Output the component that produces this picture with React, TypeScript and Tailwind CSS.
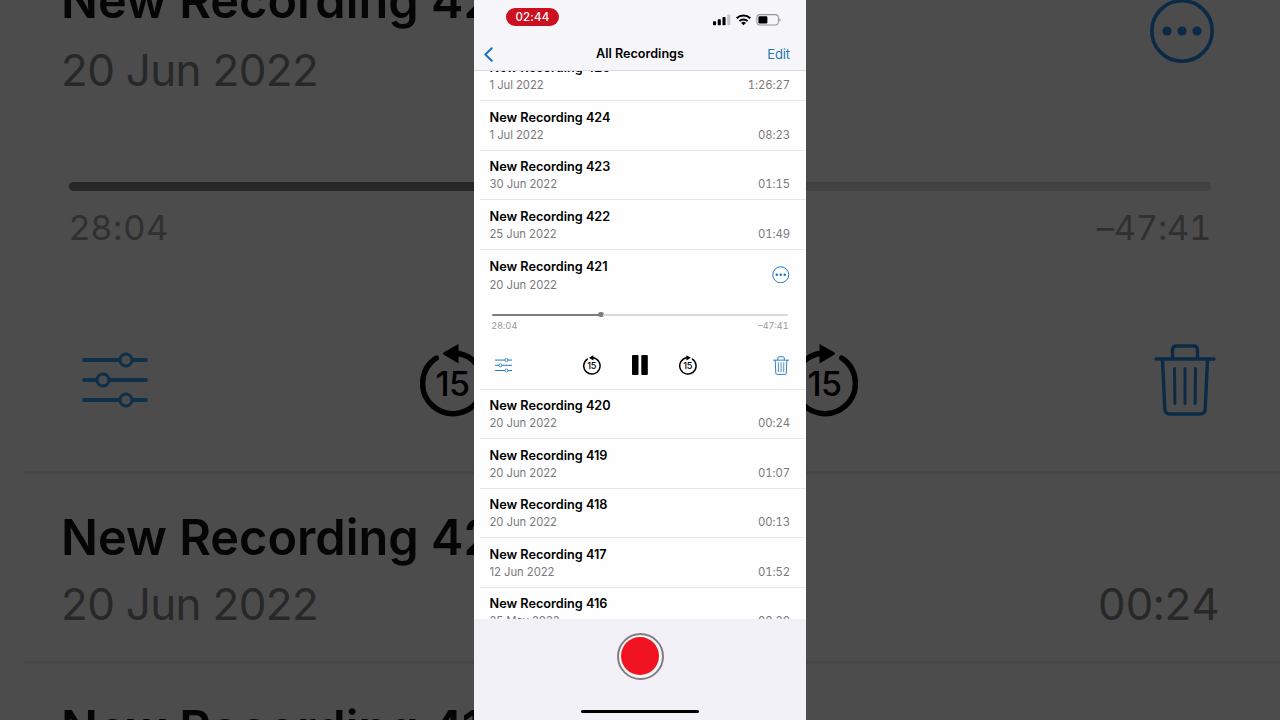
import React from "react";

type Recording = { title: string; date: string; length: string };

const newer: Recording[] = [
  { title: "New Recording 425", date: "1 Jul 2022", length: "1:26:27" },
  { title: "New Recording 424", date: "1 Jul 2022", length: "08:23" },
  { title: "New Recording 423", date: "30 Jun 2022", length: "01:15" },
  { title: "New Recording 422", date: "25 Jun 2022", length: "01:49" },
];

const older: Recording[] = [
  { title: "New Recording 420", date: "20 Jun 2022", length: "00:24" },
  { title: "New Recording 419", date: "20 Jun 2022", length: "01:07" },
  { title: "New Recording 418", date: "20 Jun 2022", length: "00:13" },
  { title: "New Recording 417", date: "12 Jun 2022", length: "01:52" },
  { title: "New Recording 416", date: "25 May 2022", length: "00:20" },
];

type IconProps = { className: string };

function SlidersIcon({ className }: IconProps) {
  return (
    <svg viewBox="0 0 66 56" fill="none" stroke="currentColor" strokeWidth="3.8" className={className}>
      <path d="M2 8h35.500M50.500 8H64M2 28h12.500M27.500 28H64M2 48h35.500M50.500 48H64" strokeLinecap="round" />
      <circle cx="44" cy="8" r="6" strokeWidth="3" />
      <circle cx="21" cy="28" r="6" strokeWidth="3" />
      <circle cx="44" cy="48" r="6" strokeWidth="3" />
    </svg>
  );
}

function SkipIcon({ className, forward = false }: IconProps & { forward?: boolean }) {
  return (
    <svg viewBox="0 0 66 74" className={className}>
      <g transform={forward ? "translate(66 0) scale(-1 1)" : undefined}>
        <path d="M37 10.300A30.300 30.300 0 1 1 16.300 15" fill="none" stroke="currentColor" strokeWidth="5.400" strokeLinecap="round" />
        <path d="M38.500 1v19.500L23.500 11.500Q22.500 10.500 23.500 9.500z" fill="currentColor" />
      </g>
      <text
        x="32.500"
        y="53"
        textAnchor="middle"
        fill="currentColor"
        className="font-['Inter'] text-[34px] font-medium tracking-[-0.5px]"
      >
        15
      </text>
    </svg>
  );
}

function MoreIcon({ className }: IconProps) {
  return (
    <svg viewBox="0 0 66 66" className={className}>
      <circle cx="33" cy="33" r="30.200" fill="none" stroke="currentColor" strokeWidth="3.600" />
      <circle cx="18" cy="33" r="4.600" fill="currentColor" />
      <circle cx="33" cy="33" r="4.600" fill="currentColor" />
      <circle cx="48" cy="33" r="4.600" fill="currentColor" />
    </svg>
  );
}

function TrashIcon({ className }: IconProps) {
  return (
    <svg viewBox="0 0 62 74" fill="none" stroke="currentColor" strokeWidth="3.400" strokeLinecap="round" className={className}>
      <path d="M2 16h58M18.500 15V7q0-4 4-4h17q4 0 4 4v8" />
      <path d="M8.500 17l2.300 49q.3 5 5.200 5h30q4.900 0 5.200-5l2.300-49" />
      <path d="M20.500 25.500l.4 35M31 25.500v35M41.500 25.500l-.4 35" strokeWidth="3" />
    </svg>
  );
}

function Separator() {
  return <div className="ml-1.5 h-px shrink-0 bg-[#e8e8ea]" />;
}

function Row({ title, date, length }: Recording) {
  return (
    <div className="h-[49.5px] shrink-0">
      <Separator />
      <div className="flex flex-col pt-[7.400px] pr-4 pl-[15.5px]">
        <div className="h-[18px] text-[12.700px] leading-[18px] font-semibold text-black">{title}</div>
        <div className="flex h-4 justify-between text-[11.300px] leading-4 tracking-[-0.05px] text-[#7a7a7d]">
          <span>{date}</span>
          <span className="tabular-nums">{length}</span>
        </div>
      </div>
    </div>
  );
}

function ActiveRow() {
  return (
    <div className="flex h-[140px] shrink-0 flex-col">
      <Separator />
      <div className="flex justify-between pt-[7.900px] pr-4 pl-[15.5px]">
        <div>
          <div className="h-[18px] text-[12.700px] leading-[17px] font-semibold text-black">New Recording 421</div>
          <div className="h-[18px] text-[11.300px] leading-[18px] tracking-[-0.05px] text-[#7a7a7d]">20 Jun 2022</div>
        </div>
        <MoreIcon className="mt-2 mr-[0.5px] size-[17.500px] text-[#1b72b8]" />
      </div>
      <div className="mt-[18px] mr-[18px] ml-[18px] flex h-1.5 items-center">
        <div className="h-0.5 w-[107px] rounded-l-full bg-[#7d7d7f]" />
        <div className="-mx-px size-[5.500px] rounded-full bg-[#7d7d7f]" />
        <div className="h-0.5 grow rounded-r-full bg-[#d9d9db]" />
      </div>
      <div className="mt-[2px] mr-[17.500px] ml-[17.500px] flex h-3 justify-between text-[9px] leading-3 tracking-[0.15px] text-[#98989b]">
        <span>28:04</span>
        <span className="tracking-normal tabular-nums">–47:41</span>
      </div>
      <div className="mt-[21.800px] grid h-6 grid-cols-[1fr_auto_1fr] items-center pr-[16.500px] pl-[21px]">
        <SlidersIcon className="h-[14.600px] w-[17.200px] text-[#2478b8]" />
        <div className="flex items-center gap-[31.200px] pr-[5px]">
          <SkipIcon className="h-[20px] w-[17.800px] text-black" />
          <svg viewBox="0 0 16 20" className="h-5 w-4 text-black" fill="currentColor">
            <rect x="0" y="0" width="6.500" height="20" rx="1" />
            <rect x="9.300" y="0" width="6.500" height="20" rx="1" />
          </svg>
          <SkipIcon forward className="h-[20px] w-[17.800px] text-black" />
        </div>
        <TrashIcon className="h-[19.200px] w-[16.100px] justify-self-end text-[#1b72b8]" />
      </div>
    </div>
  );
}

function StatusBar() {
  return (
    <div className="flex h-[35px] items-start justify-between pr-6 pl-8">
      <div className="mt-2 flex h-[18px] w-[53px] items-center justify-center rounded-full bg-[#cc1020] text-[11.500px] font-medium tracking-[0.2px] text-white">
        <span className="pt-[1.500px]">02:44</span>
      </div>
      <div className="mt-3.5 flex h-3">
        <svg viewBox="0 0 67 12" className="h-[12.400px] w-[69px]">
          <rect x="0" y="7" width="3" height="4" rx=".7" />
          <rect x="4.600" y="5.200" width="3" height="5.800" rx=".7" />
          <rect x="9.200" y="3" width="3" height="8" rx=".7" />
          <rect x="13.800" y=".5" width="3" height="10.500" rx=".7" fill="#c4c3c7" />
          <g fill="none" stroke="#000" strokeWidth="2">
            <path d="M23 4.100a9.600 9.600 0 0 1 13.200 0" />
            <path d="M25.600 6.900a5.700 5.700 0 0 1 8 0" />
          </g>
          <path d="M29.600 11l-2.300-2.300a3.300 3.300 0 0 1 4.600 0z" />
          <rect x="42.600" y=".6" width="20.900" height="10" rx="3" fill="none" stroke="#96959a" strokeWidth="1" />
          <rect x="44.100" y="2.100" width="8.700" height="7" rx="1.200" />
          <path d="M64.500 4.200q1.200.5 1.200 1.600t-1.200 1.600z" fill="#96959a" />
        </svg>
      </div>
    </div>
  );
}

function Phone() {
  return (
    <main className="flex h-full w-[332px] shrink-0 flex-col bg-[#fefefe]">
      <header className="h-[71px] shrink-0 border-b border-[#dddce0] bg-[#f6f5f9]">
        <StatusBar />
        <div className="grid h-[37px] grid-cols-[1fr_auto_1fr] items-center pt-px pr-4 pl-[9.500px]">
          <svg viewBox="0 0 9 15" className="h-[15px] w-[9px] text-[#1672c6]" fill="none" stroke="currentColor" strokeWidth="1.900" strokeLinecap="round" strokeLinejoin="round">
            <path d="M7.800 1.200L1.300 7.500l6.500 6.300" />
          </svg>
          <h1 className="pt-px pl-[6.500px] text-[12.600px] font-semibold text-black">All Recordings</h1>
          <span className="justify-self-end pt-px text-[13px] tracking-[-0.1px] text-[#1d76b8]">Edit</span>
        </div>
      </header>
      <section className="h-[548px] shrink-0 overflow-hidden">
        <div className="-mt-[20.400px] flex flex-col">
          {newer.map((r) => (
            <Row key={r.title} {...r} />
          ))}
          <ActiveRow />
          {older.map((r) => (
            <Row key={r.title} {...r} />
          ))}
        </div>
      </section>
      <footer className="flex grow flex-col items-center bg-[#f2f1f8] pt-[13.500px]">
        <div className="flex size-[47px] items-center justify-center rounded-full border-2 border-[#7f7f84] bg-[#f8f4f8]">
          <div className="size-[38.500px] rounded-full bg-[#f01420]" />
        </div>
        <div className="mt-[30px] h-[3.500px] w-[118.500px] rounded-full bg-black" />
      </footer>
    </main>
  );
}

function BackdropLeft() {
  return (
    <aside className="flex h-full w-[474px] shrink-0 flex-col overflow-hidden bg-[#4c4c4c] whitespace-nowrap">
      <div className="-mt-[29px] h-[60px] shrink-0 pl-[61px] text-[48.700px] leading-[60px] font-semibold text-[#050505]">New Recording 42</div>
      <div className="mt-[8.500px] h-[60px] shrink-0 pl-[61px] text-[44px] leading-[60px] tracking-[-0.700px] text-[#282828]">20 Jun 2022</div>
      <div className="mt-[82px] ml-[69px] h-[9px] shrink-0 rounded-l-full bg-[#272727]" />
      <div className="mt-[17px] h-10 shrink-0 pl-[69px] text-[34.500px] leading-10 tracking-[0.700px] text-[#303030]">28:04</div>
      <div className="mt-[92px] flex h-20 shrink-0 items-center pl-[82px]">
        <SlidersIcon className="h-14 w-[66px] shrink-0 text-[#10304a]" />
        <SkipIcon className="ml-[272px] h-[74px] w-[66px] shrink-0 text-black" />
      </div>
      <div className="mt-[51px] ml-6 h-[3px] shrink-0 bg-[#464646]" />
      <div className="mt-[34.500px] h-[60px] shrink-0 pl-[61px] text-[48.700px] leading-[60px] font-semibold text-[#050505]">New Recording 42</div>
      <div className="mt-[5.500px] h-[60px] shrink-0 pl-[61px] text-[44px] leading-[60px] tracking-[-0.700px] text-[#282828]">20 Jun 2022</div>
      <div className="mt-[27px] ml-6 h-[3px] shrink-0 bg-[#464646]" />
      <div className="mt-[35px] h-[60px] shrink-0 pl-[61px] text-[48.700px] leading-[60px] font-semibold text-[#050505]">New Recording 41</div>
    </aside>
  );
}

function BackdropRight() {
  return (
    <aside className="flex h-full w-[474px] shrink-0 flex-col overflow-hidden bg-[#4c4c4c] whitespace-nowrap">
      <MoreIcon className="-mt-[2px] mr-[65px] size-[66px] shrink-0 self-end text-[#0b2a46]" />
      <div className="mt-[118px] mr-[69px] h-[9px] shrink-0 rounded-r-full bg-[#414141]" />
      <div className="mt-[17px] h-10 shrink-0 pr-[69px] text-right text-[34.500px] leading-10 tracking-[-0.300px] text-[#303030] tabular-nums">–47:41</div>
      <div className="mt-[92px] flex h-20 shrink-0 items-center justify-between pr-16">
        <SkipIcon forward className="-ml-[14px] h-[74px] w-[66px] shrink-0 text-black" />
        <TrashIcon className="h-[74px] w-[62px] shrink-0 text-[#0b2a46]" />
      </div>
      <div className="mt-[51px] h-[3px] shrink-0 bg-[#464646]" />
      <div className="mt-[99.500px] h-[60px] shrink-0 pr-[61px] text-right text-[44px] leading-[60px] tracking-[-0.900px] text-[#282828] tabular-nums">00:24</div>
      <div className="mt-[27.500px] h-[3px] shrink-0 bg-[#464646]" />
    </aside>
  );
}

export default function App() {
  return (
    <div className="flex h-[720px] w-[1280px] overflow-hidden font-['Inter',sans-serif]">
      <BackdropLeft />
      <Phone />
      <BackdropRight />
    </div>
  );
}
